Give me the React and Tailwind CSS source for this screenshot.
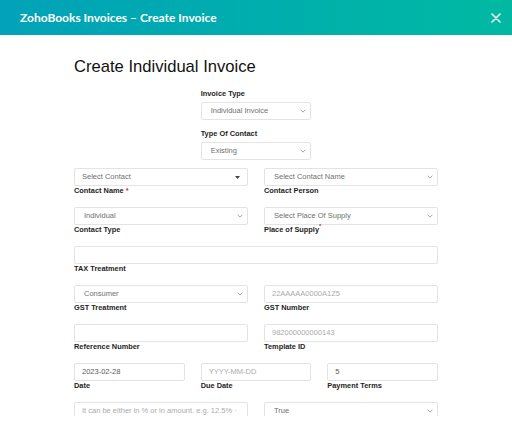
import React from "react";

const Chevron = () => (
  <svg width="6" height="4" viewBox="0 0 6 4" className="shrink-0">
    <path d="M0.6 0.8 L3 3.1 L5.4 0.8" fill="none" stroke="#8a8a8a" strokeWidth="0.8" />
  </svg>
);

const Caret = () => (
  <svg width="5" height="3" viewBox="0 0 5 3" className="shrink-0">
    <path d="M0 0 L5 0 L2.5 3 Z" fill="#444" />
  </svg>
);

function Select({ text, caret, pl = "pl-[9px]" }) {
  return (
    <div className={`h-[18px] flex items-center justify-between ${pl} pr-[4px] border border-[#e3e3e3] rounded-[2px] bg-white text-[7.5px] text-[#707070] overflow-hidden whitespace-nowrap`}>
      <span>{text}</span>
      {caret ? <span className="pr-[3px]"><Caret /></span> : <Chevron />}
    </div>
  );
}

function Input({ text, placeholder }) {
  return (
    <div className="h-[18px] flex items-center pl-[7px] border border-[#e3e3e3] rounded-[2px] bg-white text-[7.5px] overflow-hidden whitespace-nowrap">
      {text ? <span className="text-[#5a5a5a]">{text}</span> : <span className="text-[#ababab]">{placeholder}</span>}
    </div>
  );
}

function Label({ children, req, tight }) {
  return (
    <div className="h-[10px] leading-[10px] text-[7.4px] font-bold text-[#1e1e1e] whitespace-nowrap">
      {children}
      {req && (tight ? <sup className="text-[#e02424] text-[6px] align-top leading-[8px]">*</sup> : <span className="text-[#e02424]"> *</span>)}
    </div>
  );
}

function Field({ label, req, tight, children }) {
  return (
    <div className="flex flex-col">
      {children}
      {label && <Label req={req} tight={tight}>{label}</Label>}
    </div>
  );
}

export default function App() {
  return (
    <div className="w-[512px] h-[441px] bg-white flex flex-col overflow-hidden" style={{ fontFamily: '"Liberation Sans", Arial, sans-serif' }}>
      <div className="h-[35px] shrink-0 flex items-center justify-between pl-[20px] pr-[11px] bg-gradient-to-r from-[#02a2b8] to-[#01b9a2]">
        <span className="text-white text-[12px] font-bold" style={{ fontFamily: 'Lato, "Open Sans", sans-serif' }}>
          ZohoBooks Invoices – Create Invoice
        </span>
        <svg width="10" height="10" viewBox="0 0 10 10">
          <path d="M1 1 L9 9 M9 1 L1 9" stroke="white" strokeWidth="1.5" strokeLinecap="round" />
        </svg>
      </div>
      <div className="h-[381px] shrink-0 overflow-hidden">
        <div className="w-[364px] mx-auto pt-[22px]">
          <h1 className="text-[16.6px] leading-[20px] text-[#111] font-normal">Create Individual Invoice</h1>
          <div className="grid grid-cols-3 gap-x-4 mt-[12px]">
            <div className="col-start-2 flex flex-col">
              <Label>Invoice Type</Label>
              <div className="mt-[3px]"><Select text="Individual Invoice" /></div>
              <div className="mt-[9px]"><Label>Type Of Contact</Label></div>
              <div className="mt-[3px]"><Select text="Existing" /></div>
            </div>
          </div>
          <div className="flex flex-col gap-[11px] mt-[8px]">
            <div className="grid grid-cols-2 gap-x-4">
              <Field label="Contact Name" req><Select text="Select Contact" caret pl="pl-[7px]" /></Field>
              <Field label="Contact Person"><Select text="Select Contact Name" /></Field>
            </div>
            <div className="grid grid-cols-2 gap-x-4">
              <Field label="Contact Type"><Select text="Individual" /></Field>
              <Field label="Place of Supply" req tight><Select text="Select Place Of Supply" /></Field>
            </div>
            <Field label="TAX Treatment"><Input placeholder="" /></Field>
            <div className="grid grid-cols-2 gap-x-4">
              <Field label="GST Treatment"><Select text="Consumer" /></Field>
              <Field label="GST Number"><Input placeholder="22AAAAA0000A1Z5" /></Field>
            </div>
            <div className="grid grid-cols-2 gap-x-4">
              <Field label="Reference Number"><Input placeholder="" /></Field>
              <Field label="Template ID"><Input placeholder="982000000000143" /></Field>
            </div>
            <div className="grid grid-cols-3 gap-x-4">
              <Field label="Date"><Input text="2023-02-28" /></Field>
              <Field label="Due Date"><Input placeholder="YYYY-MM-DD" /></Field>
              <Field label="Payment Terms"><Input text="5" /></Field>
            </div>
            <div className="grid grid-cols-2 gap-x-4">
              <Field><Input placeholder="It can be either in % or in amount. e.g. 12.5% ·" /></Field>
              <Field><Select text="True" /></Field>
            </div>
          </div>
        </div>
      </div>
      <div className="flex-1 bg-white" />
    </div>
  );
}
